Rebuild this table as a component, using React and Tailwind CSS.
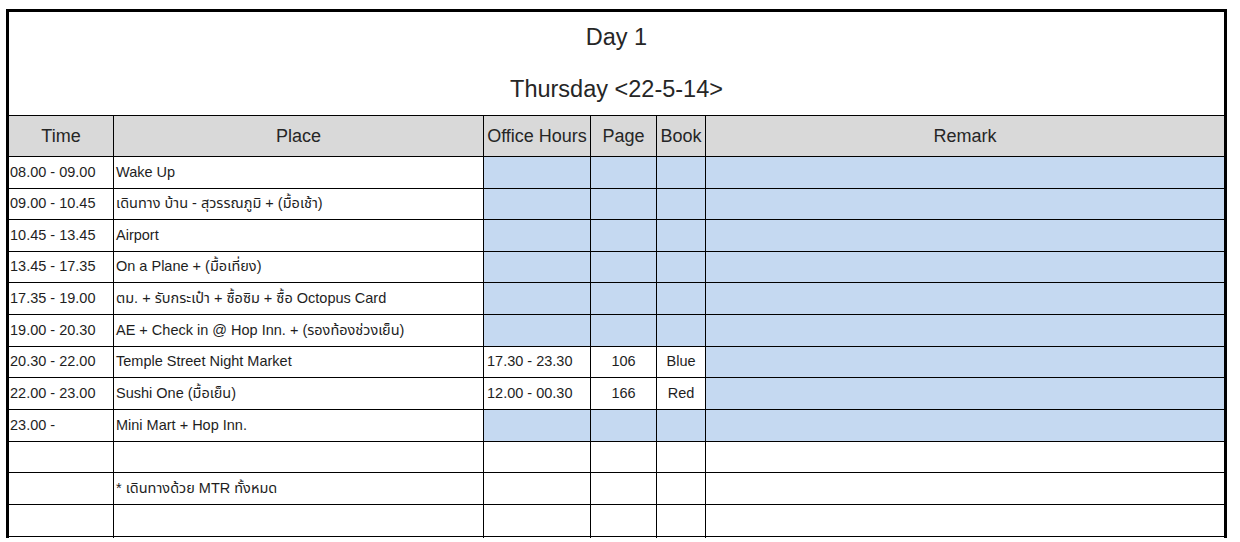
import React from "react";

const cols = [
  "w-[104px] pl-[1px] text-left",
  "w-[370px] pl-[2px] text-left border-l border-black",
  "w-[107px] pl-[3px] text-left border-l border-black",
  "w-[66px] text-center border-l border-black",
  "w-[49px] text-center border-l border-black",
  "w-[519px] text-left border-l border-black",
];

const headCols = [
  "w-[104px]",
  "w-[370px] border-l border-black",
  "w-[107px] border-l border-black",
  "w-[66px] border-l border-black",
  "w-[49px] border-l border-black",
  "w-[519px] border-l border-black",
];

const BLUE = "bg-[#c5d9f1]";

const rows = [
  { h: "h-[32px]", c: ["08.00 - 09.00", "Wake Up", "", "", "", ""], blue: [2, 3, 4, 5] },
  { h: "h-[31px]", c: ["09.00 - 10.45", "เดินทาง บ้าน - สุวรรณภูมิ + (มื้อเช้า)", "", "", "", ""], blue: [2, 3, 4, 5] },
  { h: "h-[32px]", c: ["10.45 - 13.45", "Airport", "", "", "", ""], blue: [2, 3, 4, 5] },
  { h: "h-[31px]", c: ["13.45 - 17.35", "On a Plane + (มื้อเที่ยง)", "", "", "", ""], blue: [2, 3, 4, 5] },
  { h: "h-[32px]", c: ["17.35 - 19.00", "ตม. + รับกระเป๋า + ซื้อซิม + ซื้อ Octopus Card", "", "", "", ""], blue: [2, 3, 4, 5] },
  { h: "h-[32px]", c: ["19.00 - 20.30", "AE + Check in @ Hop Inn. + (รองท้องช่วงเย็น)", "", "", "", ""], blue: [2, 3, 4, 5] },
  { h: "h-[31px]", c: ["20.30 - 22.00", "Temple Street Night Market", "17.30 - 23.30", "106", "Blue", ""], blue: [5] },
  { h: "h-[32px]", c: ["22.00 - 23.00", "Sushi One (มื้อเย็น)", "12.00 - 00.30", "166", "Red", ""], blue: [5] },
  { h: "h-[32px]", c: ["23.00 -", "Mini Mart + Hop Inn.", "", "", "", ""], blue: [2, 3, 4, 5] },
  { h: "h-[31px]", c: ["", "", "", "", "", ""], blue: [] },
  { h: "h-[32px]", c: ["", "* เดินทางด้วย MTR ทั้งหมด", "", "", "", ""], blue: [] },
  { h: "h-[32px]", c: ["", "", "", "", "", ""], blue: [] },
  { h: "h-[32px]", c: ["", "", "", "", "", ""], blue: [] },
];

export default function App() {
  return (
    <div
      className="w-[1240px] h-[542px] bg-white overflow-hidden pt-[9px] pl-[6px]"
      style={{ fontFamily: '"Liberation Sans", Arial, "Noto Sans Thai", "DejaVu Sans", sans-serif' }}
    >
      <div className="w-[1221px] h-[529px] border-t-[3px] border-l-[3px] border-r-[3px] border-black overflow-hidden text-[#1e1e1e]">
        <div className="h-[104px] border-b border-black flex flex-col">
          <div className="h-[52px] flex items-center justify-center text-[23.5px] text-[#262626]">Day 1</div>
          <div className="h-[51px] flex items-center justify-center text-[23.5px] text-[#262626]">
            Thursday &lt;22-5-14&gt;
          </div>
        </div>
        <div className="flex h-[41px] border-b border-black bg-[#d9d9d9] text-[18px] text-[#262626]">
          {["Time", "Place", "Office Hours", "Page", "Book", "Remark"].map((t, i) => (
            <div key={t} className={`${headCols[i]} flex items-center justify-center whitespace-nowrap`}>
              {t}
            </div>
          ))}
        </div>
        {rows.map((r, ri) => (
          <div key={ri} className={`flex ${r.h} border-b border-black text-[14.5px]`}>
            {r.c.map((t, ci) => (
              <div
                key={ci}
                className={`${cols[ci]} ${r.blue.includes(ci) ? BLUE : "bg-white"} flex items-center ${
                  ci === 3 || ci === 4 ? "justify-center" : ""
                } whitespace-nowrap overflow-hidden`}
              >
                {t}
              </div>
            ))}
          </div>
        ))}
      </div>
    </div>
  );
}
